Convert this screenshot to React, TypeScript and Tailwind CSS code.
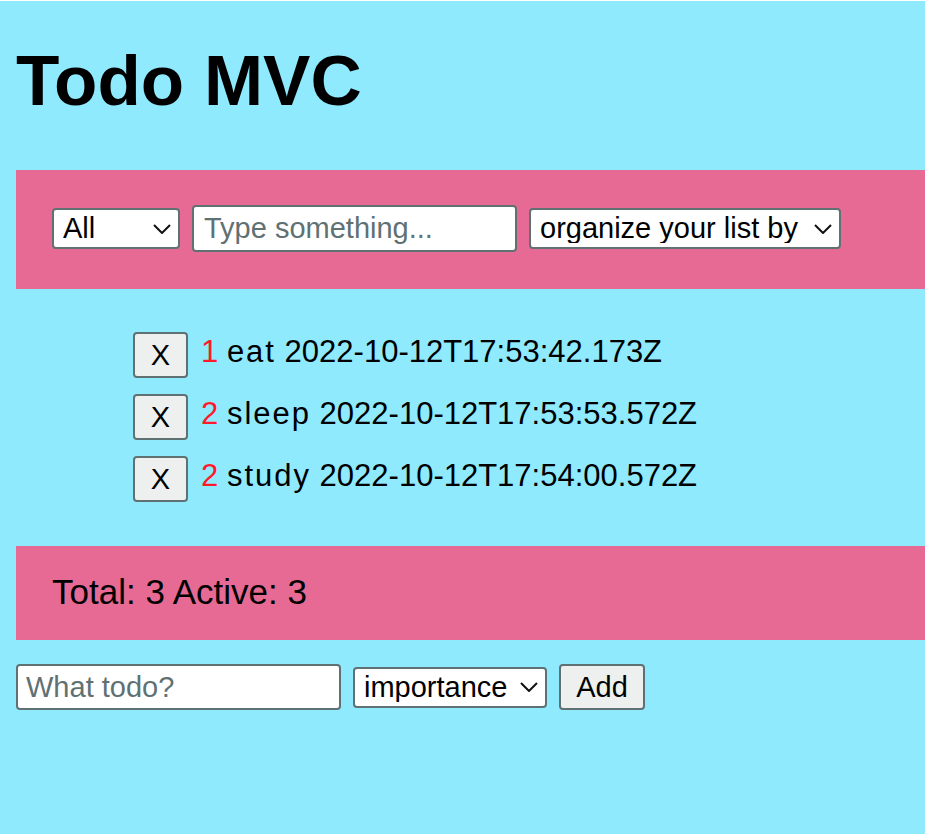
import React from "react";

const todos = [
  { id: 1, importance: 1, text: "eat", date: "2022-10-12T17:53:42.173Z" },
  { id: 2, importance: 2, text: "sleep", date: "2022-10-12T17:53:53.572Z" },
  { id: 3, importance: 2, text: "study", date: "2022-10-12T17:54:00.572Z" },
];

function Chevron() {
  return (
    <svg
      width="18"
      height="10"
      viewBox="0 0 18 10"
      fill="none"
      stroke="#111"
      strokeWidth="2"
      className="pointer-events-none absolute right-[9px] top-1/2 -translate-y-1/2"
    >
      <polyline points="1,1 9,9 17,1" />
    </svg>
  );
}

function Select({ width, options }: { width: string; options: string[] }) {
  return (
    <div className={`relative ${width}`}>
      <select className="h-[41px] w-full appearance-none rounded-[4px] border-2 border-[#5f7173] bg-white pl-[9px] pr-8 text-[29px] leading-none text-black outline-none">
        {options.map((o) => (
          <option key={o}>{o}</option>
        ))}
      </select>
      <Chevron />
    </div>
  );
}

export default function App() {
  return (
    <div
      className="min-h-screen border-t border-white bg-[#8feafe] pl-4 text-black"
      style={{ fontFamily: '"Liberation Sans", Arial, sans-serif' }}
    >
      <h1 className="mt-[39px] text-[71px] font-bold leading-[82px]">Todo MVC</h1>

      <div className="mt-[48px] flex items-center gap-3 bg-[#e66a93] pb-[37px] pl-[36px] pt-[35px]">
        <Select width="w-[128px]" options={["All", "Active", "Completed"]} />
        <input
          placeholder="Type something..."
          className="h-[47px] w-[325px] rounded-[4px] border-2 border-[#5f7173] bg-white px-[10px] text-[29px] leading-none outline-none placeholder:text-[#5f7173]"
        />
        <Select width="w-[312px]" options={["organize your list by", "importance", "date"]} />
      </div>

      <ul className="flex flex-col gap-4 pb-[44px] pl-[117px] pt-[43px]">
        {todos.map((t) => (
          <li key={t.id} className="flex items-center gap-[13px]">
            <button className="h-[46px] w-[55px] rounded-[4px] border-2 border-[#5f7173] bg-[#eef0ef] text-[29px] leading-none">
              X
            </button>
            <span className="whitespace-nowrap pb-[6px] text-[31px] leading-[36px]">
              <span className="text-[#ff1a2a]">{t.importance}</span>{" "}
              <span className="tracking-[2px]">{t.text}</span> {t.date}
            </span>
          </li>
        ))}
      </ul>

      <div className="bg-[#e66a93] pb-[28px] pl-[36px] pt-[26px] text-[35px] leading-[40px]">
        Total: 3 Active: 3
      </div>

      <div className="mt-[24px] flex items-center gap-3">
        <input
          placeholder="What todo?"
          className="h-[46px] w-[325px] rounded-[4px] border-2 border-[#5f7173] bg-white px-[8px] text-[29px] leading-none outline-none placeholder:text-[#5f7173]"
        />
        <Select width="w-[194px]" options={["importance", "1", "2", "3"]} />
        <button className="h-[46px] w-[86px] rounded-[4px] border-2 border-[#5f7173] bg-[#eef0ef] text-[29px] leading-none">
          Add
        </button>
      </div>
    </div>
  );
}
